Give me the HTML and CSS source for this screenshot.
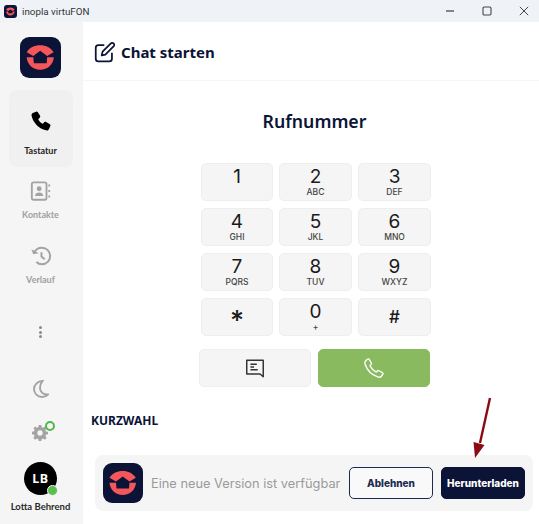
FILE: index.html
```html
<!DOCTYPE html>
<html>
<head>
    <title>inopla virtuFON</title>
    <link rel="stylesheet" href="styles.css">
</head>
<body>
    <svg class="defs" width="0" height="0">
        <symbol id="logo" viewBox="0 0 40 40">
            <rect width="40" height="40" rx="9" fill="#0b1437"/>
            <path d="M6.500 14.800C9 10.500 14 8 19.700 8C25.500 8 30 10.500 32.800 14.800L26.500 18.500L19.700 13.500L13 18.500Z" fill="#f4565a"/>
            <path d="M6.500 19.700H13L13.500 25.500H26L26.500 19.700H33C32.500 26.500 27 32 19.700 32C12.500 32 7 26.500 6.500 19.700Z" fill="#f4565a"/>
        </symbol>
    </svg>

    <div class="titlebar">
        <svg class="app-icon"><use href="#logo"/></svg>
        <span class="app-name">inopla virtuFON</span>
        <div class="win-controls">
            <svg width="10" height="10" viewBox="0 0 10 10"><path d="M1 5H9" stroke="#555" stroke-width="1.400"/></svg>
            <svg width="10" height="10" viewBox="0 0 10 10"><rect x="1" y="1" width="8" height="8" rx="1.200" fill="none" stroke="#444" stroke-width="1.100"/></svg>
            <svg width="10" height="10" viewBox="0 0 10 10"><path d="M.8 .8L9.200 9.200M9.200 .8L.8 9.200" stroke="#444" stroke-width="1"/></svg>
        </div>
    </div>

    <div class="app">
        <!-- Sidebar -->
        <aside class="sidebar">
            <svg class="side-logo"><use href="#logo"/></svg>
            <div class="nav-item active">
                <svg width="22" height="22" viewBox="0 0 24 24"><path d="M6.600 1.800L3 3.400C1.800 4 1.500 5.200 1.800 6.600C3.400 14 10 20.600 17.400 22.200C18.800 22.500 20 22.200 20.600 21L22.200 17.400C22.500 16.700 22.300 16 21.700 15.600L17.600 13C17 12.600 16.300 12.700 15.800 13.200L14 15C11.500 13.800 10.200 12.500 9 10L10.800 8.200C11.300 7.700 11.400 7 11 6.400L8.400 2.300C8 1.700 7.300 1.500 6.600 1.800Z" fill="#000"/></svg>
                <span>Tastatur</span>
            </div>
            <div class="nav-item">
                <svg width="22" height="22" viewBox="0 0 24 24" fill="none" stroke="#a3a3a3" stroke-width="2"><rect x="2" y="2.500" width="16" height="19" rx="2"/><circle cx="10" cy="9.500" r="2.700" fill="#a3a3a3" stroke="none"/><path d="M5.500 17.500C5.500 14.500 7.500 13.500 10 13.500C12.500 13.500 14.500 14.500 14.500 17.500Z" fill="#a3a3a3" stroke="none"/><path d="M21 5V7M21 11V13M21 17V19"/></svg>
                <span>Kontakte</span>
            </div>
            <div class="nav-item">
                <svg width="22" height="22" viewBox="0 0 24 24" fill="none" stroke="#a3a3a3" stroke-width="2.200"><path d="M4.500 8.500C6 5 9 3 13 3C18 3 22 7 22 12C22 17 18 21 13 21C10.500 21 8.500 20 7 18.500"/><path d="M1.500 4.500L3.500 10L9.500 9Z" fill="#a3a3a3" stroke="none"/><path d="M12.500 8V12.500L16 15.500"/></svg>
                <span>Verlauf</span>
            </div>
            <div class="dots"><i></i><i></i><i></i></div>
            <svg class="moon" width="16" height="18" viewBox="0 0 16 18"><path d="M9.500 1C5 1.200 1 4.500 1 9C1 13.500 4.600 17 9 17C11.200 17 13.400 16.200 15 14.500C10.500 14.800 7 12.200 7 8C7 5.500 8 3 9.500 1Z" fill="none" stroke="#a3a3a3" stroke-width="1.900"/></svg>
            <div class="gear">
                <svg width="16" height="16" viewBox="0 0 24 24"><path fill="#a3a3a3" fill-rule="evenodd" d="M10 0H14L14.600 3.200L16.600 4L19.300 2.200L22 5L20 7.600L20.900 9.600L24 10V14L20.900 14.600L20 16.600L21.900 19.300L19.200 22L16.600 20.100L14.600 20.900L14 24H10L9.400 20.900L7.400 20.100L4.800 22L2 19.200L4 16.600L3.100 14.600L0 14V10L3.100 9.400L4 7.400L2.100 4.800L4.800 2.100L7.400 4L9.400 3.200ZM12 8A4 4 0 1 0 12 16A4 4 0 1 0 12 8Z"/></svg>
                <span class="gear-badge"></span>
            </div>
            <div class="avatar">LB<span class="status"></span></div>
            <span class="user-name">Lotta Behrend</span>
        </aside>

        <main class="content">
            <header class="head">
                <svg width="21" height="21" viewBox="0 0 24 24" fill="none" stroke="#0b1437" stroke-width="2" stroke-linecap="round" stroke-linejoin="round"><path d="M11 3.500H5C3.300 3.500 2 4.800 2 6.500V19C2 20.700 3.300 22 5 22H17.500C19.200 22 20.500 20.700 20.500 19V13"/><path d="M19 1.800C20 .8 21.500 .8 22.400 1.700C23.300 2.600 23.300 4.100 22.300 5.100L13 14.400L8.800 15.400L9.800 11Z"/></svg>
                <h1>Chat starten</h1>
            </header>

            <h2 class="dial-title">Rufnummer</h2>

            <div class="keypad">
                <button class="key"><b>1</b></button>
                <button class="key"><b>2</b><small>ABC</small></button>
                <button class="key"><b>3</b><small>DEF</small></button>
                <button class="key"><b>4</b><small>GHI</small></button>
                <button class="key"><b>5</b><small>JKL</small></button>
                <button class="key"><b>6</b><small>MNO</small></button>
                <button class="key"><b>7</b><small>PQRS</small></button>
                <button class="key"><b>8</b><small>TUV</small></button>
                <button class="key"><b>9</b><small>WXYZ</small></button>
                <button class="key star"><b>*</b></button>
                <button class="key"><b>0</b><small>+</small></button>
                <button class="key sym"><b>#</b></button>
            </div>

            <div class="actions">
                <button class="msg-btn">
                    <svg width="22" height="22" viewBox="0 0 24 24" fill="none" stroke="#333" stroke-width="1.600" stroke-linejoin="round"><path d="M3 3.500H21V21.500L17.500 18.500H3Z"/><path d="M7 8H14M7 11H11M7 14H15"/></svg>
                </button>
                <button class="call-btn">
                    <svg width="22" height="22" viewBox="0 0 24 24" fill="none" stroke="#fff" stroke-width="1.500" stroke-linejoin="round"><path d="M5 2.500L3 4C1.800 5 1.800 6.500 2.300 8C4.500 14.500 9.500 19.500 16 21.700C17.500 22.200 19 22.200 20 21L21.500 19C22 18.300 21.900 17.600 21.300 17.200L17.500 15C16.900 14.600 16.200 14.700 15.700 15.200L14.500 16.400C11.500 15 9 12.500 7.600 9.500L8.800 8.300C9.300 7.800 9.400 7.100 9 6.500L6.800 2.700C6.400 2.100 5.700 2 5 2.500Z"/></svg>
                </button>
            </div>

            <div class="quick-title">KURZWAHL</div>

            <div class="banner">
                <svg class="banner-logo"><use href="#logo"/></svg>
                <span class="banner-text">Eine neue Version ist verfügbar</span>
                <button class="btn-outline">Ablehnen</button>
                <button class="btn-dark">Herunterladen</button>
            </div>

            <!-- arrow on top of the screenshot -->
            <svg class="arrow" width="24" height="64" viewBox="0 0 24 64"><path d="M18 2L8 47" stroke="#8b0a14" stroke-width="2.400"/><path d="M1.500 46L12.500 49L3 62Z" fill="#8b0a14"/></svg>
        </main>
    </div>
</body>
</html>
```

FILE: styles.css
```css
* { box-sizing: border-box; }
html, body { height: 100%; }
body {
    margin: 0;
    overflow: hidden;
    display: flex;
    flex-direction: column;
    font-family: "Noto Sans", sans-serif;
    background: #fff;
}
button { font-family: inherit; padding: 0; cursor: pointer; }
.defs { position: absolute; }

/* Title bar */
.titlebar {
    height: 22px;
    flex: none;
    display: flex;
    align-items: center;
    padding-left: 4px;
    background: #eff3f8;
}
.app-icon { width: 13px; height: 13px; }
.app-name {
    margin-left: 5px;
    font-family: Roboto, sans-serif;
    font-size: 9.800px;
    color: #333;
}
.win-controls {
    margin-left: auto;
    display: flex;
    gap: 27px;
    padding-right: 10px;
}

.app { flex: 1; display: flex; min-height: 0; }

/* Sidebar */
.sidebar {
    width: 83px;
    flex: none;
    display: flex;
    flex-direction: column;
    align-items: center;
    padding: 15px 2px 0 0;
    background: #f5f5f5;
    font-family: Lato, sans-serif;
}
.side-logo { width: 41px; height: 41px; flex: none; }
.nav-item {
    width: 64px;
    height: 66px;
    flex: none;
    display: flex;
    flex-direction: column;
    align-items: center;
    gap: 7px;
    padding-top: 13px;
    font-size: 9px;
    font-weight: 700;
    color: #a0a0a0;
}
.nav-item span { line-height: 11px; }
.nav-item.active {
    height: 77px;
    margin-top: 12px;
    padding-top: 20px;
    gap: 13px;
    background: #f0f0f0;
    border-radius: 8px;
    color: #222;
}
.nav-item:nth-of-type(3) { height: 64px; padding-top: 12px; }
.dots {
    display: flex;
    flex-direction: column;
    gap: 1.500px;
    margin-top: 29px;
}
.dots i {
    width: 3px;
    height: 3px;
    border-radius: 50%;
    background: #8a8a8a;
}
.moon { margin-top: 42px; flex: none; }
.gear {
    position: relative;
    flex: none;
    height: 16px;
    margin: 27px 2px 0 0;
}
.gear-badge {
    position: absolute;
    top: -4px;
    right: -7px;
    width: 10px;
    height: 10px;
    border-radius: 50%;
    border: 2px solid #4fb848;
    background: #f5f5f5;
}
.avatar {
    position: relative;
    flex: none;
    width: 33px;
    height: 33px;
    margin-top: 21px;
    border-radius: 50%;
    background: #000;
    color: #fff;
    font: 700 12.500px/33px "Noto Sans", sans-serif;
    letter-spacing: .5px;
    text-align: center;
}
.status {
    position: absolute;
    right: -1px;
    bottom: -1px;
    width: 11px;
    height: 11px;
    border-radius: 50%;
    background: #5bbf50;
    border: 1px solid #f5f5f5;
}
.user-name {
    margin-top: 6px;
    font-size: 9.500px;
    line-height: 11px;
    font-weight: 700;
    white-space: nowrap;
    color: #2a2a2a;
}

/* Main area */
.content {
    position: relative;
    flex: 1;
    min-width: 0;
    display: flex;
    flex-direction: column;
}
.head {
    height: 59px;
    flex: none;
    display: flex;
    align-items: center;
    gap: 6px;
    padding: 2px 0 0 11px;
    border-bottom: 1px solid #f5f5f5;
}
.head h1 {
    margin: 0;
    font-size: 15px;
    font-weight: 700;
    color: #0b1437;
}
.dial-title {
    margin: 20px 0 0;
    height: 42px;
    line-height: 40px;
    text-align: center;
    font-size: 17.700px;
    font-weight: 600;
    color: #0b1437;
    padding-left: 7px;
}
.keypad {
    display: grid;
    grid-template-columns: 72px 73px 73px;
    grid-auto-rows: 38px;
    gap: 7px 6px;
    justify-content: start;
    margin: 20px 0 0 118px;
}
.key {
    display: flex;
    flex-direction: column;
    align-items: center;
    background: #f5f5f5;
    border: 1px solid #eeeeee;
    border-radius: 5px;
    padding-top: 3px;
    font-family: Inter, sans-serif;
    color: #1a1a1a;
}
.key b {
    font-size: 19px;
    font-weight: 400;
    line-height: 20px;
}
.key small {
    font-size: 8.500px;
    font-weight: 500;
    line-height: 10px;
    color: #444;
}
.key.sym { justify-content: center; padding-top: 0; }
.key.sym b { font-weight: 500; font-size: 17px; }
.key.star { justify-content: center; padding-top: 8px; }
.key.star b { font-weight: 500; font-size: 27px; }
.actions {
    display: flex;
    gap: 7px;
    margin: 13px 0 0 116px;
}
.msg-btn, .call-btn {
    width: 112px;
    height: 38px;
    display: flex;
    align-items: center;
    justify-content: center;
    border-radius: 5px;
}
.msg-btn { background: #f5f5f5; border: 1px solid #eeeeee; }
.call-btn { background: #8aba5f; border: 1px solid #8aba5f; }
.quick-title {
    margin: 26px 0 0 8px;
    font-size: 12px;
    line-height: 16px;
    font-weight: 700;
    color: #0b1437;
}
.banner {
    margin: 26px 0 0 12px;
    width: 438px;
    height: 56px;
    display: flex;
    align-items: center;
    padding-left: 8px;
    background: #f5f5f5;
    border-radius: 8px;
}
.banner-logo { width: 40px; height: 40px; flex: none; }
.banner-text {
    margin-left: 8px;
    font: 400 12.800px Inter, sans-serif;
    color: #9a9a9a;
    white-space: nowrap;
}
.btn-outline, .btn-dark {
    width: 84px;
    height: 32px;
    border-radius: 5px;
    font-family: Inter, sans-serif;
    font-size: 10px;
    font-weight: 800;
}
.btn-outline {
    margin-left: auto;
    background: #f9f9f9;
    border: 1.500px solid #1d2a50;
    color: #1d2a50;
}
.btn-dark {
    margin: 0 8px 0 8px;
    background: #0b1437;
    border: 1px solid #0b1437;
    color: #fff;
}
.arrow {
    position: absolute;
    left: 389px;
    top: 374px;
}
```
